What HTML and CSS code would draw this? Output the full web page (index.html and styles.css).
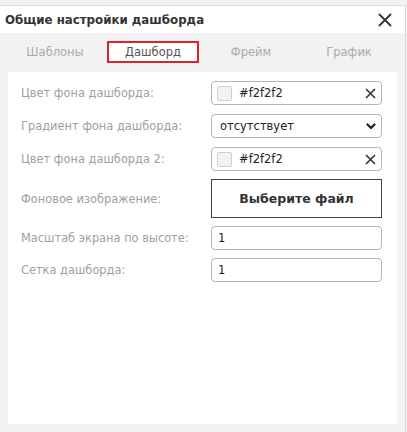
FILE: index.html
```html
<!DOCTYPE html>
<html lang="ru">
<head>
  <meta charset="UTF-8" />
  <title>Общие настройки дашборда</title>
  <link rel="stylesheet" href="styles.css">
</head>
<body>
  <div class="dialog">
    <div class="dialog-header">
      <span class="dialog-title">Общие настройки дашборда</span>
      <svg class="dialog-close" width="14" height="14" viewBox="0 0 14 14">
        <path d="M1 1 L13 13 M13 1 L1 13" stroke="#333" stroke-width="1.8"/>
      </svg>
    </div>

    <div class="tabs">
      <div class="tab">Шаблоны</div>
      <div class="tab active">Дашборд</div>
      <div class="tab">Фрейм</div>
      <div class="tab">График</div>
    </div>

    <div class="panel">
      <div class="row">
        <label>Цвет фона дашборда:</label>
        <div class="field color-field">
          <span class="swatch"></span>
          <span class="color-value">#f2f2f2</span>
          <svg class="clear" width="11" height="11" viewBox="0 0 11 11">
            <path d="M1 1 L10 10 M10 1 L1 10" stroke="#333" stroke-width="1.6"/>
          </svg>
        </div>
      </div>

      <div class="row">
        <label>Градиент фона дашборда:</label>
        <div class="field select-field">
          <span>отсутствует</span>
          <svg class="chevron" width="10" height="7" viewBox="0 0 10 7">
            <path d="M1.5 1.5 L5 5 L8.5 1.5" fill="none" stroke="#222" stroke-width="2.2" stroke-linecap="round" stroke-linejoin="round"/>
          </svg>
        </div>
      </div>

      <div class="row">
        <label>Цвет фона дашборда 2:</label>
        <div class="field color-field">
          <span class="swatch"></span>
          <span class="color-value">#f2f2f2</span>
          <svg class="clear" width="11" height="11" viewBox="0 0 11 11">
            <path d="M1 1 L10 10 M10 1 L1 10" stroke="#333" stroke-width="1.6"/>
          </svg>
        </div>
      </div>

      <div class="row file-row">
        <label>Фоновое изображение:</label>
        <button class="file-button">Выберите файл</button>
      </div>

      <div class="row">
        <label>Масштаб экрана по высоте:</label>
        <div class="field">1</div>
      </div>

      <div class="row">
        <label>Сетка дашборда:</label>
        <div class="field">1</div>
      </div>
    </div>
  </div>
</body>
</html>
```

FILE: styles.css
```css
body {
  margin: 0;
  padding-top: 5px;
  background-color: #f2f2f2;
  font-family: "DejaVu Sans", Verdana, sans-serif;
}

.dialog {
  width: 406px;
  height: 427px;
  box-sizing: border-box;
  border-top: 1px solid #dedede;
  border-right: 1px solid #d6d6d6;
  background-color: #f2f2f2;
  display: flex;
  flex-direction: column;
}

.dialog-header {
  display: flex;
  justify-content: space-between;
  align-items: center;
  height: 27px;
  padding: 0 13px 0 5px;
  background-color: #ffffff;
}

.dialog-title {
  font-size: 11.8px;
  font-weight: bold;
  color: #333333;
}

.tabs {
  display: flex;
  align-items: center;
  gap: 6px;
  padding: 8px 8px 9px 9px;
}

.tab {
  width: 92px;
  height: 22px;
  box-sizing: border-box;
  display: flex;
  justify-content: center;
  align-items: center;
  font-size: 11.5px;
  color: #aaaaaa;
}

.tab.active {
  border: 2px solid #d9232d;
  background-color: #ffffff;
  color: #555555;
}

.panel {
  flex: 1;
  margin: 0 8px 8px 8px;
  padding: 9px 14px 0 13px;
  background-color: #ffffff;
}

.row {
  display: flex;
  align-items: center;
  margin-bottom: 9px;
}

.row label {
  width: 190px;
  font-size: 11.4px;
  color: #a0a0a0;
}

.field {
  width: 171px;
  height: 24px;
  box-sizing: border-box;
  display: flex;
  align-items: center;
  padding: 0 5px 0 6px;
  border: 1px solid #b4b4b4;
  border-radius: 4px;
  font-size: 11.5px;
  color: #222222;
}

.color-field {
  padding-left: 5px;
}

.swatch {
  width: 15px;
  height: 15px;
  box-sizing: border-box;
  border: 1px solid #d0d0d0;
  border-radius: 2px;
  background-color: #f2f2f2;
  margin-right: 7px;
}

.color-value {
  flex: 1;
}

.select-field {
  justify-content: space-between;
  padding-left: 8px;
}

.file-row {
  margin-top: -1px;
  margin-bottom: 8px;
}

.file-button {
  width: 171px;
  height: 39px;
  border: 1px solid #444444;
  background-color: #ffffff;
  font-family: "DejaVu Sans", Verdana, sans-serif;
  font-size: 12.5px;
  font-weight: bold;
  color: #333333;
}

.file-row + .row {
  margin-bottom: 8px;
}
```
